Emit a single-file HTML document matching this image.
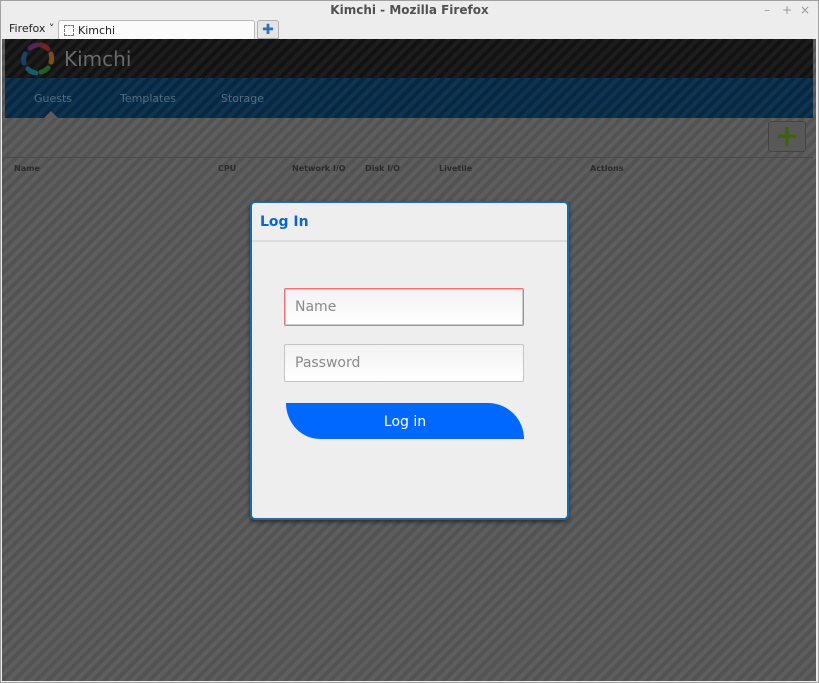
<!DOCTYPE html>
<html><head><meta charset="utf-8"><style>
*{margin:0;padding:0;box-sizing:border-box}
body{width:819px;height:683px;overflow:hidden;background:#f0f0f0;font-family:"DejaVu Sans","Liberation Sans",sans-serif;position:relative}
.win{position:absolute;left:0;top:0;width:819px;height:683px;border:1px solid #a0a0a0;background:#ededed}
.title{position:absolute;top:2px;left:0;width:817px;text-align:center;font-size:12px;font-weight:bold;color:#505050}
.ctl{position:absolute;top:2px;font-size:12px;color:#999}
.ffx{position:absolute;left:8px;top:21px;font-size:11px;color:#222}
.tab{position:absolute;left:57px;top:19px;width:197px;height:20px;background:#fbfbfb;border:1px solid #b8b8b8;border-bottom:none;border-radius:3px 3px 0 0;font-size:11px;color:#222;padding:3px 0 0 19px}
.tab i{position:absolute;left:5px;top:4px;width:10px;height:11px;border:1px dashed #777}
.newtab{position:absolute;left:256px;top:19px;width:22px;height:19px;background:#e4e4e4;border:1px solid #b0b0b0;border-radius:3px 3px 0 0;color:#2f6fc0;font-weight:bold;font-size:14px;text-align:center;line-height:18px}
.content{position:absolute;left:1px;top:38px;width:814px;height:642px;background:#5b5b5b repeating-linear-gradient(135deg,#5e5e5e 0 4px,#535353 4px 8px)}
.hdr{position:absolute;left:3px;top:0;width:808px;height:39px;background:#141414 repeating-linear-gradient(135deg,#1d1d1d 0 4px,#121212 4px 8px)}
.nav{position:absolute;left:3px;top:39px;width:808px;height:40px;background:#0a2d48 repeating-linear-gradient(135deg,#0d3452 0 4px,#092840 4px 8px)}
.nav span{position:absolute;top:14px;font-size:11px;color:#4f6d82}
.th{position:absolute;top:125px;font-size:8px;font-weight:bold;color:#2b2b2b}
.add{position:absolute;left:766px;top:82px;width:38px;height:31px;border:1px solid #444;border-radius:3px;background:#585858;color:#3f6010;font-size:30px;font-weight:bold;text-align:center;line-height:29px}
.dlg{position:absolute;left:249px;top:200px;width:319px;height:319px;background:#eeeeee;border:2px solid #1a6aa8;border-radius:5px;box-shadow:0 2px 4px rgba(0,0,0,.5)}
.dlg h1{font-size:14px;color:#0a66c8;font-weight:bold;padding:11px 0 0 8px;height:39px;border-bottom:2px solid #dcdcdc}
.inp{position:absolute;left:32px;width:240px;height:38px;border:1px solid #c4c4c4;border-radius:2px;background:linear-gradient(#f2f2f2,#fff);font-size:14px;color:#8a8a8a;padding:10px 0 0 10px}
.btn{position:absolute;left:34px;top:200px;width:238px;height:36px;background:#0068ff;border-radius:0 36px 0 34px/0 36px 0 36px;color:#fff;font-size:14px;text-align:center;line-height:38px}
</style></head><body>
<div class="win">
<div class="title">Kimchi - Mozilla Firefox</div>
<div class="ctl" style="left:763px">–</div><div class="ctl" style="left:781px">+</div><div class="ctl" style="left:799px">×</div>
<div class="ffx">Firefox ˅</div>
<div class="tab"><i></i>Kimchi</div>
<div class="newtab">✚</div>
<div class="content">
<div class="hdr">
<svg style="position:absolute;left:13px;top:1px;opacity:.6" width="38" height="38" viewBox="0 0 38 38"><g fill="none" stroke-width="5" stroke-linecap="round"><path d="M12 8 A13 13 0 0 1 19 5" stroke="#7a2a8a"/><path d="M23 5 A13 13 0 0 1 30 9" stroke="#b02828"/><path d="M33 14 A13 13 0 0 1 33 22" stroke="#c07020"/><path d="M30 28 A13 13 0 0 1 23 32" stroke="#2a8a2a"/><path d="M18 33 A13 13 0 0 1 10 29" stroke="#1a8aa0"/><path d="M6 23 A13 13 0 0 1 7 14" stroke="#1a5aa0"/></g></svg>
<div style="position:absolute;left:59px;top:8px;font-size:20px;color:#6a6a6a">Kimchi</div>
</div>
<div class="nav"><span style="left:29px">Guests</span><span style="left:115px">Templates</span><span style="left:216px">Storage</span>
<div style="position:absolute;left:39px;top:33px;border:7px solid transparent;border-bottom-color:#5b5b5b;border-top:none"></div></div>
<div style="position:absolute;left:3px;top:118px;width:808px;height:1px;background:#4a4a4a"></div>
<div class="add">+</div>
<span class="th" style="left:12px">Name</span><span class="th" style="left:216px">CPU</span><span class="th" style="left:290px">Network I/O</span><span class="th" style="left:363px">Disk I/O</span><span class="th" style="left:437px">Livetile</span><span class="th" style="left:588px">Actions</span>
</div>
<div class="dlg"><h1>Log In</h1>
<div class="inp" style="top:85px;border:1px solid #f07070;box-shadow:inset 0 0 0 1px #ccc">Name</div>
<div class="inp" style="top:141px">Password</div>
<div class="btn">Log in</div>
</div>
</div>
</body></html>
